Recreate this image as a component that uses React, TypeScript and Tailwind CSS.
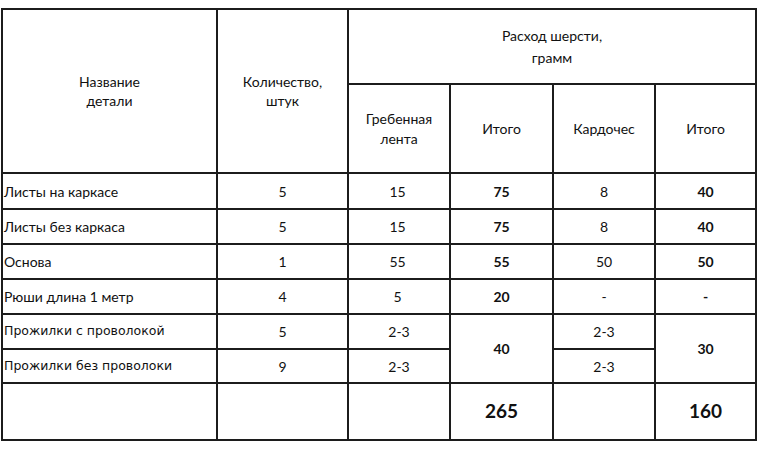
const rows = [
  { name: "Листы на каркасе", qty: "5", comb: "15", combTotal: "75", card: "8", cardTotal: "40" },
  { name: "Листы без каркаса", qty: "5", comb: "15", combTotal: "75", card: "8", cardTotal: "40" },
  { name: "Основа", qty: "1", comb: "55", combTotal: "55", card: "50", cardTotal: "50" },
  { name: "Рюши длина 1 метр", qty: "4", comb: "5", combTotal: "20", card: "-", cardTotal: "-" },
];

const Cell = ({ className = "", children }: { className?: string; children?: React.ReactNode }) => (
  <div className={`bg-white flex items-center justify-center text-center ${className}`}>{children}</div>
);

export default function App() {
  return (
    <div className="w-[760px] h-[450px] bg-white pt-[8px] pl-[1px] font-['Lato',sans-serif] text-[14px] text-[#111]">
      <div className="grid w-fit gap-[2px] p-[2px] bg-[#1c1c1c] grid-cols-[213px_129px_100px_101px_100px_99px] grid-rows-[73px_87px_34px_33px_33px_33px_33px_32px_55px]">
        {/* header */}
        <Cell className="row-span-2 leading-[19px]">
          Название
          <br />
          детали
        </Cell>
        <Cell className="row-span-2 leading-[19px]">
          Количество,
          <br />
          штук
        </Cell>
        <Cell className="col-span-4 leading-[22px]">
          Расход шерсти,
          <br />
          грамм
        </Cell>
        <Cell className="leading-[20px]">
          Гребенная
          <br />
          лента
        </Cell>
        <Cell>Итого</Cell>
        <Cell>Кардочес</Cell>
        <Cell>Итого</Cell>

        {/* body */}
        {rows.map((r) => (
          <>
            <Cell className="justify-start pl-[1px]">{r.name}</Cell>
            <Cell>{r.qty}</Cell>
            <Cell className="pr-[3px]">{r.comb}</Cell>
            <Cell className="font-bold">{r.combTotal}</Cell>
            <Cell>{r.card}</Cell>
            <Cell className="font-bold">{r.cardTotal}</Cell>
          </>
        ))}

        <Cell className="justify-start pl-[1px] font-['DejaVu_Sans',sans-serif] text-[12.5px]">Прожилки с проволокой</Cell>
        <Cell>5</Cell>
        <Cell>2-3</Cell>
        <Cell className="row-span-2 font-bold">40</Cell>
        <Cell>2-3</Cell>
        <Cell className="row-span-2 font-bold">30</Cell>

        <Cell className="justify-start pl-[1px] font-['DejaVu_Sans',sans-serif] text-[12.5px]">Прожилки без проволоки</Cell>
        <Cell>9</Cell>
        <Cell>2-3</Cell>
        <Cell>2-3</Cell>

        {/* totals */}
        <Cell />
        <Cell />
        <Cell />
        <Cell className="font-bold text-[19px]">265</Cell>
        <Cell />
        <Cell className="font-bold text-[19px]">160</Cell>
      </div>
    </div>
  );
}
